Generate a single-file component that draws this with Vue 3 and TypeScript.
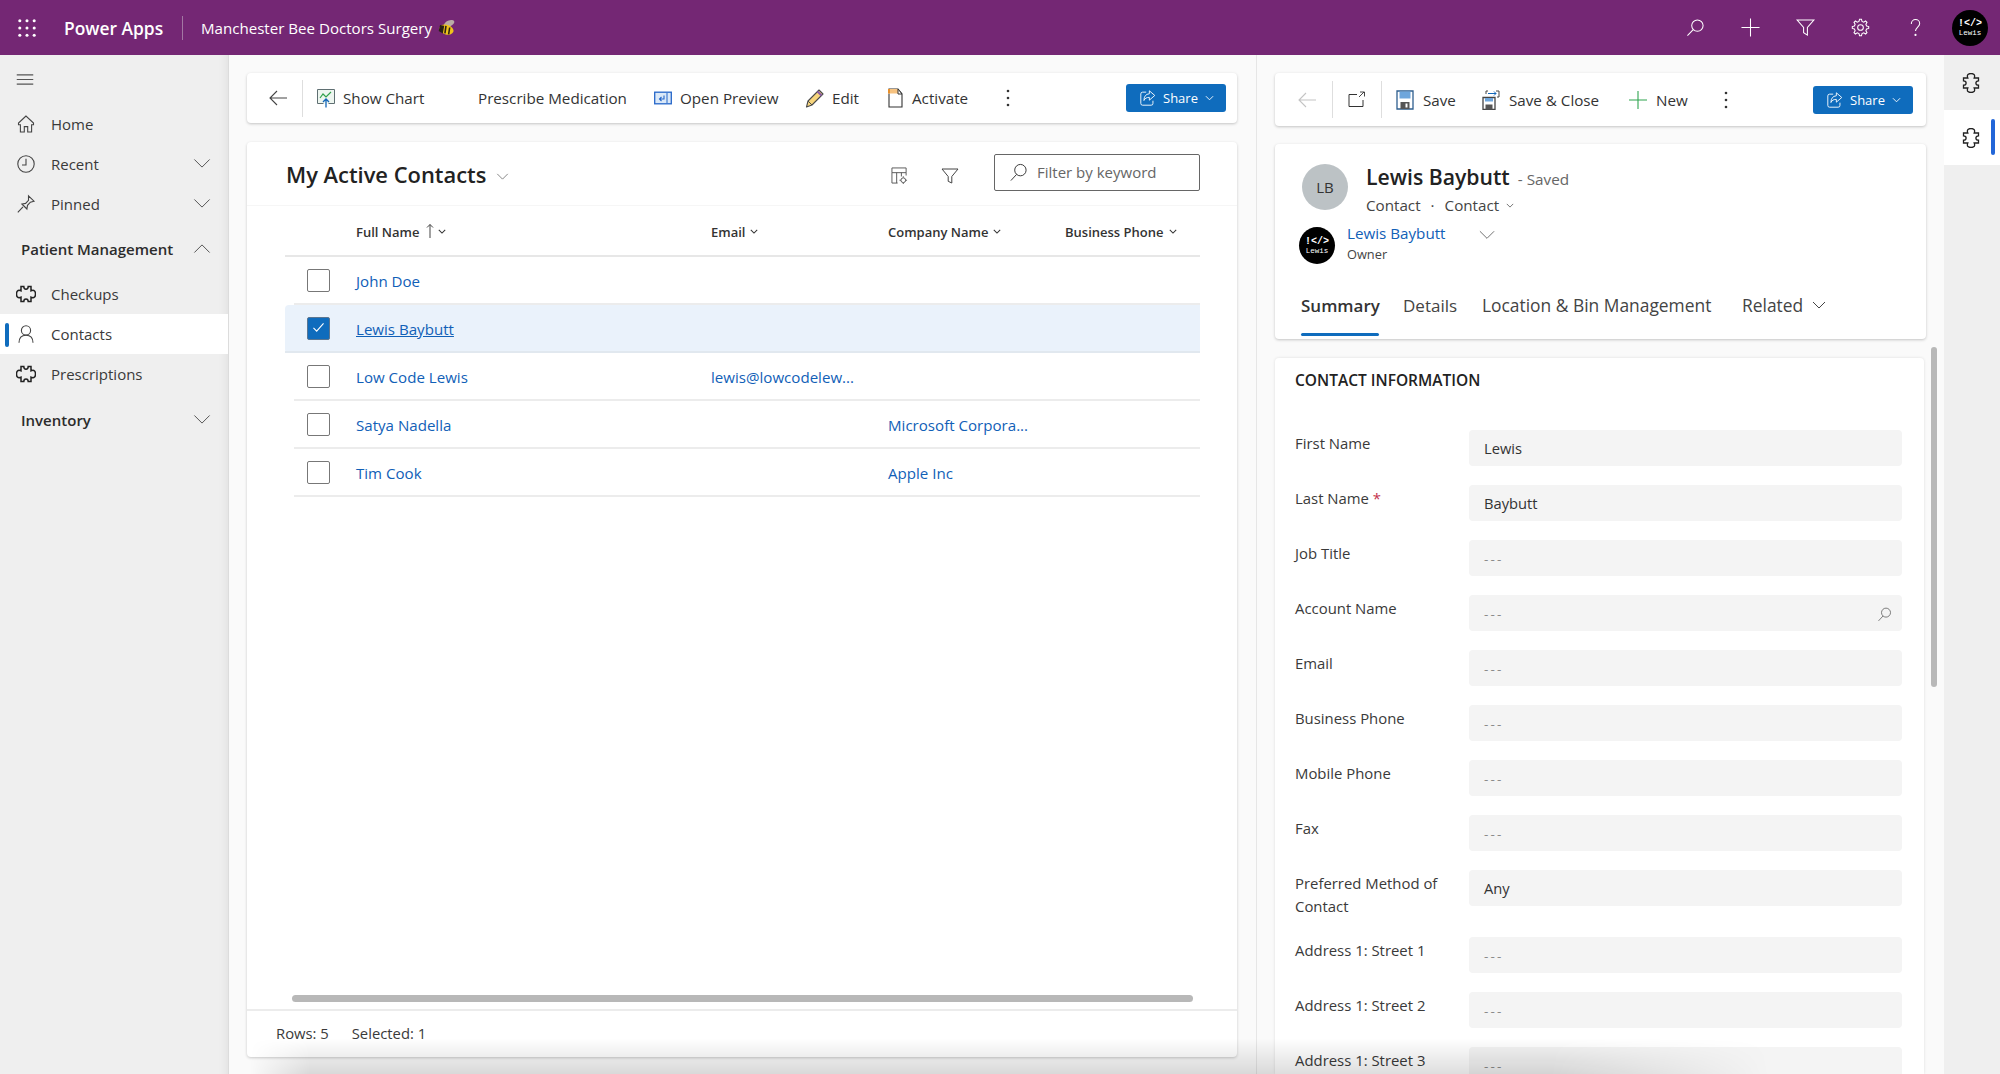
<script setup lang="ts">
const gear = (() => {
  const pts: string[] = []
  const n = 8
  for (let i = 0; i < n; i++) {
    const a = (i / n) * Math.PI * 2
    const s = Math.PI / n
    const p = (r: number, t: number) => `${(10 + r * Math.cos(t)).toFixed(2)} ${(10 + r * Math.sin(t)).toFixed(2)}`
    pts.push(p(6.6, a - s * 0.62), p(8.7, a - s * 0.3), p(8.7, a + s * 0.3), p(6.6, a + s * 0.62))
  }
  return 'M' + pts.join('L') + 'Z'
})()

const puzzle = 'M5 2.500h2.800c0 3.500 4.400 3.500 4.400 0H15v4.300c3.500-1.400 4.500.8 4.500 3.200s-1 4.600-4.500 3.200v4.300h-2.800c0-3.500-4.400-3.500-4.400 0H5v-4.300C1.500 14.600.5 12.400.5 10s1-4.600 4.500-3.200z'

const rows = [
  { name: 'John Doe', email: '', company: '' },
  { name: 'Lewis Baybutt', email: '', company: '', selected: true },
  { name: 'Low Code Lewis', email: 'lewis@lowcodelew...', company: '' },
  { name: 'Satya Nadella', email: '', company: 'Microsoft Corpora...' },
  { name: 'Tim Cook', email: '', company: 'Apple Inc' },
]
const columns = ['Email', 'Company Name', 'Business Phone']
const fields = [
  { label: 'First Name', value: 'Lewis' },
  { label: 'Last Name', value: 'Baybutt', required: true },
  { label: 'Job Title', value: '---' },
  { label: 'Account Name', value: '---', lookup: true },
  { label: 'Email', value: '---' },
  { label: 'Business Phone', value: '---' },
  { label: 'Mobile Phone', value: '---' },
  { label: 'Fax', value: '---' },
  { label: 'Preferred Method of Contact', value: 'Any' },
  { label: 'Address 1: Street 1', value: '---' },
  { label: 'Address 1: Street 2', value: '---' },
  { label: 'Address 1: Street 3', value: '---' },
]
</script>

<template>
  <div class="app">
    <header class="top">
      <svg class="waffle" viewBox="0 0 20 20"><g fill="#fff"><circle v-for="c in [2,10,18].flatMap(x => [2,10,18].map(y => [x,y]))" :key="c.join()" :cx="c[0]" :cy="c[1]" r="1.7" /></g></svg>
      <span class="brand">Power Apps</span>
      <span class="top-div"></span>
      <span class="env">Manchester Bee Doctors Surgery</span>
      <svg class="bee" viewBox="0 0 16 16">
        <ellipse cx="10.500" cy="4.200" rx="5.200" ry="2.800" fill="#b9aca6" transform="rotate(-25 10.500 4.200)" />
        <ellipse cx="8" cy="10" rx="6.800" ry="4.600" fill="#efc31a" transform="rotate(18 8 10)" />
        <path d="M2.500 6.500 1.500 11 4 12.500 5 7zM7.500 6.500 6.500 13.500M11 8l-1 6.500" fill="#2a2116" stroke="#2a2116" stroke-width="1.500" />
      </svg>
      <div class="top-right">
        <svg class="top-ic" viewBox="0 0 20 20"><circle cx="12" cy="8" r="6" /><path d="M7.600 12.200 1.500 18.500" /></svg>
        <svg class="top-ic" viewBox="0 0 20 20"><path d="M10 .5v19M.5 10h19" /></svg>
        <svg class="top-ic" viewBox="0 0 20 20"><path d="M1 2h18l-7 8v8l-4-2.400V10z" /></svg>
        <svg class="top-ic" viewBox="0 0 20 20"><path :d="gear" /><circle cx="10" cy="10" r="3" /></svg>
        <svg class="top-ic" viewBox="0 0 20 20"><path d="M5.600 6.200C5.600 3.500 7.600 1.600 10 1.600s4.400 1.800 4.400 4.200c0 3.600-4.400 3.900-4.400 8" /><circle cx="10" cy="17.800" r=".6" /></svg>
        <div class="logo logo-top"><span class="logo-a">!&lt;/&gt;</span><span class="logo-b">Lewis</span></div>
      </div>
    </header>

    <div class="body">
      <nav class="nav">
        <svg class="burger" viewBox="0 0 18 12"><path d="M0 1h18M0 6h18M0 11h18" /></svg>
        <div class="nav-row"><svg class="nav-ic" viewBox="0 0 20 20"><path d="M10 2 2.500 9v1.800H4.400V18h3.900v-5.400h3.400V18h3.900v-7.200h1.900V9z" /></svg><span>Home</span></div>
        <div class="nav-row"><svg class="nav-ic" viewBox="0 0 20 20"><circle cx="10" cy="10" r="8.200" /><path d="M10 4.800V11H6" /></svg><span>Recent</span><svg class="chev" viewBox="0 0 20 12"><path d="M1.500 1.500 10 10l8.500-8.500" /></svg></div>
        <div class="nav-row"><svg class="nav-ic" viewBox="0 0 20 20"><path d="M12.500 1.800 18 7.200l-3.600 1-2.900 3.100-.6 3.700-5-5 3.700-.6 2.900-3zM7 12.800l-5.200 5.600" /></svg><span>Pinned</span><svg class="chev" viewBox="0 0 20 12"><path d="M1.500 1.500 10 10l8.500-8.500" /></svg></div>
        <div class="nav-group first"><span>Patient Management</span><svg class="chev" viewBox="0 0 20 12"><path d="M1.500 10.500 10 2l8.500 8.500" /></svg></div>
        <div class="nav-row sub"><svg class="nav-ic puz" viewBox="0 0 20 20"><path :d="puzzle" /></svg><span>Checkups</span></div>
        <div class="nav-row active"><i class="bar"></i><svg class="nav-ic" viewBox="0 0 20 20"><circle cx="10" cy="6.400" r="4.600" /><path d="M3 18.800c0-4.600 2.600-7.600 7-7.600s7 3 7 7.600" /></svg><span>Contacts</span></div>
        <div class="nav-row"><svg class="nav-ic puz" viewBox="0 0 20 20"><path :d="puzzle" /></svg><span>Prescriptions</span></div>
        <div class="nav-group last"><span>Inventory</span><svg class="chev" viewBox="0 0 20 12"><path d="M1.500 1.500 10 10l8.500-8.500" /></svg></div>
      </nav>

      <main class="main">
        <section class="col-left">
          <div class="toolbar tl">
            <div class="tb-back"><svg class="arrow" viewBox="0 0 18 16"><path d="M8 1 1 8l7 7M1 8h17" /></svg></div>
            <i class="tb-div"></i>
            <div class="btn w-chart">
              <svg class="b-ic" viewBox="0 0 20 20"><path d="M1.500 1.500h17v14h-17z" fill="#eef6f0" /><path d="M12.500 15.500h6v-14h-17v14h6" fill="none" stroke="#5f6f72" /><path d="M4 10l3-4 3 3 5-5" fill="none" stroke="#31a24c" stroke-width="1.200" /><path d="M10 19.500V11M7 14l3-3 3 3" fill="none" stroke="#1165b8" stroke-width="1.300" /></svg>
              <span>Show Chart</span>
            </div>
            <div class="btn w-pres"><span>Prescribe Medication</span></div>
            <div class="btn w-open">
              <svg class="b-ic s18" viewBox="0 0 18 14"><rect x=".7" y="1.200" width="16.600" height="11.600" fill="#dbe9f8" stroke="#2566c9" stroke-width="1.300" /><path d="M13 2v10" stroke="#2566c9" /><path d="M10 4.500v3.500H5.500M7.500 6 5.500 8l2 2" fill="none" stroke="#2566c9" stroke-width="1.100" /></svg>
              <span>Open Preview</span>
            </div>
            <div class="btn w-edit">
              <svg class="b-ic" viewBox="0 0 20 20"><path d="M1.500 19 3 13 14 2l4 4L7 17z" fill="#f7d57c" stroke="#4a4a4a" stroke-width="1.100" stroke-linejoin="round" /><path d="M12.500 3.500l4 4" stroke="#8a5aa8" stroke-width="2" /><path d="M3 13l4 4" stroke="#4a4a4a" /></svg>
              <span>Edit</span>
            </div>
            <div class="btn w-act">
              <svg class="b-ic doc" viewBox="0 0 15 20"><path d="M1 5.500V19h13V6l-4-5H1v4" fill="#fff" stroke="#333" stroke-width="1.100" /><path d="M1 1h9v4.500H1z" fill="#f6c280" /><path d="M1 1v4.500" stroke="#e8902c" stroke-width="2" /><path d="M10 1l4 5h-4z" fill="#fff" stroke="#333" /></svg>
              <span>Activate</span>
            </div>
            <svg class="dots" viewBox="0 0 4 18"><circle cx="2" cy="2" r="1.300" /><circle cx="2" cy="9" r="1.300" /><circle cx="2" cy="16" r="1.300" /></svg>
            <div class="share">
              <svg class="share-ic" viewBox="0 0 20 20"><path d="M8 3.500H4a2 2 0 0 0-2 2V16a2 2 0 0 0 2 2h9.500a2 2 0 0 0 2-2v-3" /><path d="M11.500 2l6 5.200-6 5.200V9.300c-3 0-5 1-6 3.500 0-4.500 2-7.200 6-7.500z" /></svg>
              <span>Share</span>
              <svg class="share-ch" viewBox="0 0 10 6"><path d="M1 1l4 4 4-4" /></svg>
            </div>
          </div>

          <div class="list">
            <div class="list-head">
              <h1>My Active Contacts</h1>
              <svg class="title-ch" viewBox="0 0 14 8"><path d="M1 1l6 6 6-6" /></svg>
              <svg class="col-ic" viewBox="0 0 18 18"><path d="M1 1h15v5H1zM1 6v11h6M6 6v11M11 6v4M16 6v3" /><circle cx="13" cy="14" r="2.500" /><path d="M13 9.800v1.400M13 16.800v1.200M9 14h1.500M15.500 14H17" /></svg>
              <svg class="fil-ic" viewBox="0 0 18 18"><path d="M1 2h16l-6.200 7.500V16L7.200 14.300V9.500z" /></svg>
              <div class="search"><svg class="s-ic" viewBox="0 0 20 20"><circle cx="12" cy="7.500" r="6" /><path d="M8 12 2 18.500" /></svg><span>Filter by keyword</span></div>
            </div>
            <div class="grid-head">
              <div class="gh first-col"><span>Full Name</span><svg class="sort" viewBox="0 0 8 16"><path d="M4 15V1.500M1 4.500l3-3 3 3" /></svg><svg class="gh-ch" viewBox="0 0 10 6"><path d="M1 1l4 4 4-4" /></svg></div>
              <div v-for="c in columns" :key="c" class="gh"><span>{{ c }}</span><svg class="gh-ch" viewBox="0 0 10 6"><path d="M1 1l4 4 4-4" /></svg></div>
            </div>
            <div v-for="r in rows" :key="r.name" class="grid-row" :class="{ sel: r.selected }">
              <div class="cell-check">
                <span class="check" :class="{ on: r.selected }"><svg v-if="r.selected" viewBox="0 0 14 12"><path d="M1.500 6.500 5 10l7.500-8.500" /></svg></span>
              </div>
              <a class="cell link" :class="{ under: r.selected }">{{ r.name }}</a>
              <a class="cell link">{{ r.email }}</a>
              <a class="cell link">{{ r.company }}</a>
              <span class="cell"></span>
            </div>
            <div class="spacer"></div>
            <div class="hscroll"></div>
            <div class="list-foot"><span>Rows: 5</span><span>Selected: 1</span></div>
          </div>
        </section>

        <i class="splitter"></i>

        <section class="col-right">
          <div class="toolbar tr">
            <div class="tb-back r"><svg class="arrow light" viewBox="0 0 18 16"><path d="M8 1 1 8l7 7M1 8h17" /></svg></div>
            <i class="tb-div"></i>
            <div class="tb-pop"><svg class="pop" viewBox="0 0 18 18"><path d="M9 3.500H1v12h14V9" /><path d="M11 6l5-5M12 1h4.500v4.500" stroke-width=".9" /></svg></div>
            <i class="tb-div"></i>
            <div class="btn w-save">
              <svg class="b-ic sv" viewBox="0 0 18 20"><path d="M1 1h16v18H1z" fill="#fff" stroke="#2f5f8f" stroke-width="1.300" /><path d="M3.500 1.500h11v7h-11z" fill="#6ea6dc" /><path d="M4.500 12h9v7h-9z" fill="#555" /><path d="M9.500 13.500h2v4h-2z" fill="#fff" /></svg>
              <span>Save</span>
            </div>
            <div class="btn w-sc">
              <svg class="b-ic sv" viewBox="0 0 18 20"><path d="M1 7.500h12v12H1z" fill="#fff" stroke="#444" stroke-width="1.300" /><path d="M3 8h8v3.500H3z" fill="#6ea6dc" /><path d="M3.500 14.500h7v5h-7z" fill="#555" /><path d="M4 4V1h2M14 1h3v6h-2" fill="none" stroke="#444" /><path d="M6 3.500h8M12 1.500l2 2-2 2" fill="none" stroke="#1165b8" /></svg>
              <span>Save &amp; Close</span>
            </div>
            <div class="btn w-new">
              <svg class="plus" viewBox="0 0 20 20"><path d="M10 0v20M0 10h20" /></svg>
              <span>New</span>
            </div>
            <svg class="dots" viewBox="0 0 4 18"><circle cx="2" cy="2" r="1.300" /><circle cx="2" cy="9" r="1.300" /><circle cx="2" cy="16" r="1.300" /></svg>
            <div class="share">
              <svg class="share-ic" viewBox="0 0 20 20"><path d="M8 3.500H4a2 2 0 0 0-2 2V16a2 2 0 0 0 2 2h9.500a2 2 0 0 0 2-2v-3" /><path d="M11.500 2l6 5.200-6 5.200V9.300c-3 0-5 1-6 3.500 0-4.500 2-7.200 6-7.500z" /></svg>
              <span>Share</span>
              <svg class="share-ch" viewBox="0 0 10 6"><path d="M1 1l4 4 4-4" /></svg>
            </div>
          </div>

          <div class="record">
            <div class="rec-top">
              <div class="initials">LB</div>
              <div class="rec-title">
                <div class="rec-name"><strong>Lewis Baybutt</strong><span>- Saved</span></div>
                <div class="rec-sub"><span>Contact</span><span class="mid">·</span><span>Contact</span><svg viewBox="0 0 10 6"><path d="M1 1l4 4 4-4" /></svg></div>
              </div>
            </div>
            <div class="owner">
              <div class="logo logo-own"><span class="logo-a">!&lt;/&gt;</span><span class="logo-b">Lewis</span></div>
              <div class="own-text"><a>Lewis Baybutt</a><span>Owner</span></div>
              <svg class="own-ch" viewBox="0 0 20 12"><path d="M1.500 1.500 10 10l8.500-8.500" /></svg>
            </div>
            <div class="tabs">
              <span class="tab on">Summary</span>
              <span class="tab t2">Details</span>
              <span class="tab t3">Location &amp; Bin Management</span>
              <span class="tab t4">Related</span>
              <svg class="tab-ch" viewBox="0 0 14 8"><path d="M1 1l6 6 6-6" /></svg>
            </div>
          </div>

          <div class="form-wrap">
            <div class="form">
              <h2>CONTACT INFORMATION</h2>
              <div v-for="f in fields" :key="f.label" class="f-row">
                <label>{{ f.label }}<b v-if="f.required"> *</b></label>
                <div class="f-input" :class="{ empty: f.value === '---' }">
                  <span>{{ f.value }}</span>
                  <svg v-if="f.lookup" viewBox="0 0 20 20"><circle cx="12" cy="7.500" r="6" /><path d="M8 12 2 18.500" /></svg>
                </div>
              </div>
            </div>
            <div class="vscroll"></div>
          </div>
        </section>
      </main>

      <aside class="rail">
        <div class="rail-item"><svg class="rail-ic" viewBox="0 0 20 20"><path :d="puzzle" /></svg></div>
        <div class="rail-item on"><svg class="rail-ic" viewBox="0 0 20 20"><path :d="puzzle" /></svg><i></i></div>
      </aside>
    </div>
    <div class="dock-shadow"></div>
  </div>
</template>

<style>
html, body { margin: 0; overflow: hidden; }
</style>

<style scoped>
* { box-sizing: border-box; }
.app { width: 2000px; height: 1074px; display: flex; flex-direction: column; font-family: "Open Sans", "Noto Sans", sans-serif; font-size: 15px; color: #333; background: #fafafa; overflow: hidden; position: relative; }
svg { display: block; flex: none; fill: none; stroke: currentColor; stroke-width: 1; }

/* top bar */
.top { height: 55px; flex: none; background: #742774; color: #fff; display: flex; align-items: center; padding-left: 18px; }
.waffle { width: 18px; height: 18px; stroke: none; }
.brand { margin-left: 28px; font-size: 17.400px; font-weight: 600; width: 118px; white-space: nowrap; }
.top-div { width: 1px; height: 24px; background: #a377a3; }
.env { margin-left: 18px; font-size: 15.100px; white-space: nowrap; width: 237px; }
.bee { width: 17px; height: 17px; stroke: none; margin-top: -1px; }
.top-right { margin-left: auto; display: flex; align-items: center; padding-right: 12px; }
.top-ic { width: 19px; height: 19px; margin-right: 36px; stroke: #fff; stroke-width: 1.100; }
.logo { background: #000; border-radius: 50%; color: #fff; display: flex; flex-direction: column; align-items: center; justify-content: center; font-family: "Liberation Mono", monospace; flex: none; }
.logo-top { width: 36px; height: 36px; margin-left: -9px; }
.logo-a { font-size: 10px; line-height: 10px; font-weight: 700; }
.logo-b { font-size: 7.500px; line-height: 8px; }

/* body */
.body { flex: 1; display: flex; min-height: 0; }

/* nav */
.nav { width: 229px; flex: none; background: #efefef; border-right: 1px solid #dcdcdc; box-shadow: inset -14px 0 12px -14px rgba(0,0,0,.08); padding-top: 19px; }
.burger { width: 18px; height: 11px; margin: 0 0 19px 16px; stroke: #555; stroke-width: 1.200; }
.nav-row { height: 40px; display: flex; align-items: center; position: relative; padding-left: 16px; font-size: 15px; color: #3a3a3a; }
.nav-row > span { margin-left: 15px; }
.nav-ic { width: 20px; height: 20px; stroke: #444; stroke-width: 1.100; }
.puz { stroke: #222; stroke-width: 1.500; }
.chev { width: 18px; height: 11px; position: absolute; right: 17px; top: 14px; stroke: #555; stroke-width: 1.100; }
.nav-group { height: 40px; display: flex; align-items: center; position: relative; padding-left: 21px; font-size: 15px; font-weight: 600; color: #2c2c2c; }
.nav-group.first { margin-top: 5px; margin-bottom: 5px; }
.nav-group.last { margin-top: 6px; }
.active { background: #fff; }
.bar { position: absolute; left: 5px; top: 9px; width: 4px; height: 24px; background: #0f6cbd; border-radius: 2px; }

/* main */
.main { flex: 1; display: flex; min-width: 0; }
.col-left { width: 1027px; padding: 18px 0 0 18px; flex: none; }
.splitter { width: 1px; background: #e6e6e6; flex: none; }
.col-right { flex: 1; padding: 18px 0 0 18px; min-width: 0; display: flex; flex-direction: column; }

.toolbar { background: #fff; border-radius: 4px; box-shadow: 0 1px 3px rgba(0,0,0,.22); display: flex; align-items: center; font-size: 15.200px; color: #333; }
.tl { width: 990px; height: 50px; }
.tr { width: 651px; height: 53px; }
.tb-back { width: 55px; padding-left: 22px; }
.tb-back.r { width: 57px; padding-left: 23px; }
.arrow { width: 18px; height: 16px; stroke: #444; stroke-width: 1.100; }
.arrow.light { stroke: #c4c4c4; }
.tb-div { width: 1px; height: 37px; background: #dedede; flex: none; }
.tb-pop { width: 48px; display: flex; justify-content: center; }
.pop { width: 18px; height: 18px; stroke: #333; }
.btn { display: flex; align-items: center; flex: none; white-space: nowrap; }
.b-ic { width: 20px; height: 20px; margin-right: 7px; stroke: none; }
.s18 { width: 18px; height: 14px; margin-right: 8px; }
.doc { width: 15px; margin-right: 9px; }
.sv { width: 18px; height: 20px; margin-right: 9px; }
.w-chart { width: 175px; padding-left: 13px; }
.w-pres { width: 176px; }
.w-open { width: 151px; }
.w-edit { width: 83px; }
.w-act { width: 118px; }
.w-save { width: 100px; padding-left: 14px; }
.w-sc { width: 132px; }
.w-new { width: 110px; padding-left: 15px; }
.plus { width: 18px; height: 18px; stroke: #2ea44f; stroke-width: 1.200; margin-right: 9px; }
.dots { width: 4px; height: 18px; stroke: none; fill: #333; }
.share { margin-left: auto; margin-right: 11px; width: 100px; height: 28px; background: #0f6cbd; border-radius: 3px; color: #fff; display: flex; align-items: center; padding-left: 13px; font-size: 13px; }
.tr .share { margin-right: 13px; }
.share-ic { width: 18px; height: 18px; stroke: #fff; margin-right: 6px; }
.share-ch { width: 9px; height: 6px; margin-left: 7px; stroke: #fff; }

/* list */
.list { width: 990px; height: 915px; margin-top: 19px; background: #fff; border-radius: 4px; box-shadow: 0 1px 3px rgba(0,0,0,.2); display: flex; flex-direction: column; }
.list-head { height: 64px; flex: none; display: flex; align-items: center; border-bottom: 1px solid #f6f6f6; padding-left: 39px; padding-top: 2px; }
h1 { margin: 0; font-size: 21.900px; font-weight: 600; color: #222; line-height: 1; white-space: nowrap; width: 210px; }
.title-ch { width: 13px; height: 7px; stroke: #777; margin-top: 3px; }
.col-ic { width: 17px; height: 17px; margin-left: 382px; stroke: #555; margin-top: 2px; }
.fil-ic { width: 18px; height: 18px; margin-left: 33px; stroke: #444; margin-top: 2px; }
.search { width: 206px; height: 37px; border: 1px solid #666; border-radius: 2px; margin-left: 35px; margin-top: -5px; display: flex; align-items: center; padding-left: 14px; color: #666; font-size: 15px; }
.s-ic { width: 19px; height: 19px; margin-right: 9px; stroke: #333; }

.grid-head { height: 51px; flex: none; display: grid; grid-template-columns: 355px 177px 177px 1fr; margin: 0 37px 0 38px; padding-left: 71px; padding-top: 3px; border-bottom: 2px solid #e7e7e7; width: 915px; font-size: 13px; font-weight: 600; color: #333; }
.gh { display: flex; align-items: center; white-space: nowrap; }
.sort { width: 8px; height: 16px; margin: -2px 0 0 7px; stroke: #444; }
.gh-ch { width: 8px; height: 5px; margin-left: 5px; stroke: #333; stroke-width: 1.300; margin-top: -2px; }
.first-col .gh-ch { margin-left: 4px; }

.grid-row { height: 48px; flex: none; width: 915px; margin-left: 38px; display: grid; grid-template-columns: 71px 355px 177px 177px 1fr; align-items: center; position: relative; }
.grid-row::after { content: ""; position: absolute; left: 9px; right: 0; bottom: 0; height: 2px; background: #ececec; }
.grid-row.sel { background: #eaf2fb; border-radius: 4px 0 0 4px; }
.grid-row.sel::after { background: #e1e8ef; left: 0; }
.cell-check { padding-left: 22px; }
.check { width: 23px; height: 23px; border: 1.500px solid #777; border-radius: 2px; display: block; background: #fff; margin-top: -2px; }
.check.on { background: #0f6cbd; border-color: #5b7691; padding: 4px; }
.check svg { width: 13px; height: 11px; stroke: #fff; stroke-width: 1.200; }
.cell { white-space: nowrap; font-size: 15.100px; }
.link { color: #1160b7; margin-top: -1px; }
.under { text-decoration: underline; }
.spacer { flex: 1; }
.hscroll { margin: 0 0 7px 45px; width: 901px; height: 7px; border-radius: 4px; background: #b8b8b8; flex: none; }
.list-foot { height: 48px; flex: none; border-top: 2px solid #ececec; display: flex; align-items: center; padding: 0 0 2px 29px; gap: 23px; font-size: 14.800px; color: #3a3a3a; }

/* record */
.record { width: 651px; height: 195px; margin-top: 18px; flex: none; background: #fff; border-radius: 4px; box-shadow: 0 1px 3px rgba(0,0,0,.22); position: relative; }
.rec-top { display: flex; padding: 20px 0 0 27px; height: 83px; }
.initials { width: 46px; height: 46px; border-radius: 50%; background: #bcc2c5; color: #333; font-size: 15px; font-weight: 400; display: flex; align-items: center; justify-content: center; flex: none; }
.rec-title { margin-left: 18px; margin-top: -5px; }
.rec-name { display: flex; align-items: baseline; white-space: nowrap; line-height: 36px; }
.rec-name strong { font-size: 21.200px; font-weight: 600; color: #222; }
.rec-name span { margin-left: 8px; font-size: 15.300px; color: #666; }
.rec-sub { display: flex; align-items: center; font-size: 15.200px; font-weight: 500; color: #444; line-height: 22px; white-space: nowrap; margin-top: -3px; }
.rec-sub .mid { margin: 0 10px; font-weight: 400; }
.rec-sub svg { width: 8px; height: 5px; margin-left: 7px; stroke: #555; }
.owner { display: flex; padding-left: 24px; height: 37px; position: relative; }
.logo-own { width: 36px; height: 37px; }
.own-text { margin-left: 12px; display: flex; flex-direction: column; }
.own-text a { color: #1160b7; font-weight: 500; font-size: 15.200px; line-height: 20px; margin-top: -4px; white-space: nowrap; }
.own-text span { font-size: 12.800px; line-height: 20px; margin-top: 1px; color: #444; }
.own-ch { position: absolute; left: 203px; top: 3px; width: 18px; height: 10px; stroke: #555; }
.tabs { display: flex; align-items: center; position: absolute; left: 26px; top: 146px; height: 30px; font-size: 17px; color: #444; white-space: nowrap; }
.tab { position: relative; }
.tab.on { font-weight: 600; color: #333; width: 102px; }
.tab.on::after { content: ""; position: absolute; left: 0; width: 78px; top: 39px; height: 3px; background: #0f6cbd; border-radius: 2px; }
.tab.t2 { width: 79px; }
.tab.t3 { width: 260px; font-size: 17.400px; }
.tab.t4 { width: 70px; font-size: 17.400px; }
.tab-ch { width: 14px; height: 8px; stroke: #444; }

/* form */
.form-wrap { flex: 1; min-height: 0; position: relative; margin-top: 19px; overflow: visible; }
.form { width: 649px; background: #fff; border-radius: 4px 4px 0 0; box-shadow: 0 0 3px rgba(0,0,0,.12); padding: 0 22px 0 20px; height: 716px; overflow: hidden; }
h2 { margin: 0 0 36px; padding-top: 10px; font-size: 15.500px; font-weight: 600; color: #222; line-height: 25px; height: 36px; white-space: nowrap; }
.f-row { display: flex; margin-bottom: 19px; min-height: 36px; }
.f-row label { width: 174px; flex: none; padding-top: 2px; padding-right: 8px; line-height: 23px; font-size: 14.900px; color: #3a3a3a; }
.f-row label b { color: #c4314b; font-weight: 400; }
.f-input { flex: 1; height: 36px; background: #f4f4f4; border-radius: 4px; display: flex; align-items: center; justify-content: space-between; padding: 0 10px 0 15px; font-size: 14.700px; color: #333; }
.f-input.empty { color: #8a8a8a; font-size: 13.500px; padding-top: 2px; }
.f-input.empty span { letter-spacing: 2.200px; }
.f-input svg { width: 15px; height: 15px; stroke: #555; }
.vscroll { position: absolute; left: 656px; top: -11px; width: 6px; height: 340px; background: #b8b8b8; border-radius: 3px; }

/* rail */
.rail { width: 56px; flex: none; background: #efefef; }
.rail-item { height: 55px; display: flex; align-items: center; padding-left: 17px; position: relative; }
.rail-ic { width: 20px; height: 20px; stroke: #222; stroke-width: 1.300; transform: rotate(90deg); }
.rail-item.on { background: #fff; }
.rail-item.on i { position: absolute; left: 47px; top: 9px; width: 4px; height: 36px; border-radius: 2px; background: #2266d8; }

.dock-shadow { position: absolute; left: 250px; width: 1560px; bottom: 0; height: 36px; background: linear-gradient(to top, rgba(0,0,0,.13), rgba(0,0,0,0)); -webkit-mask-image: linear-gradient(to right, transparent 0, #000 60px, #000 1300px, transparent 1520px); mask-image: linear-gradient(to right, transparent 0, #000 60px, #000 1300px, transparent 1520px); pointer-events: none; }
</style>
